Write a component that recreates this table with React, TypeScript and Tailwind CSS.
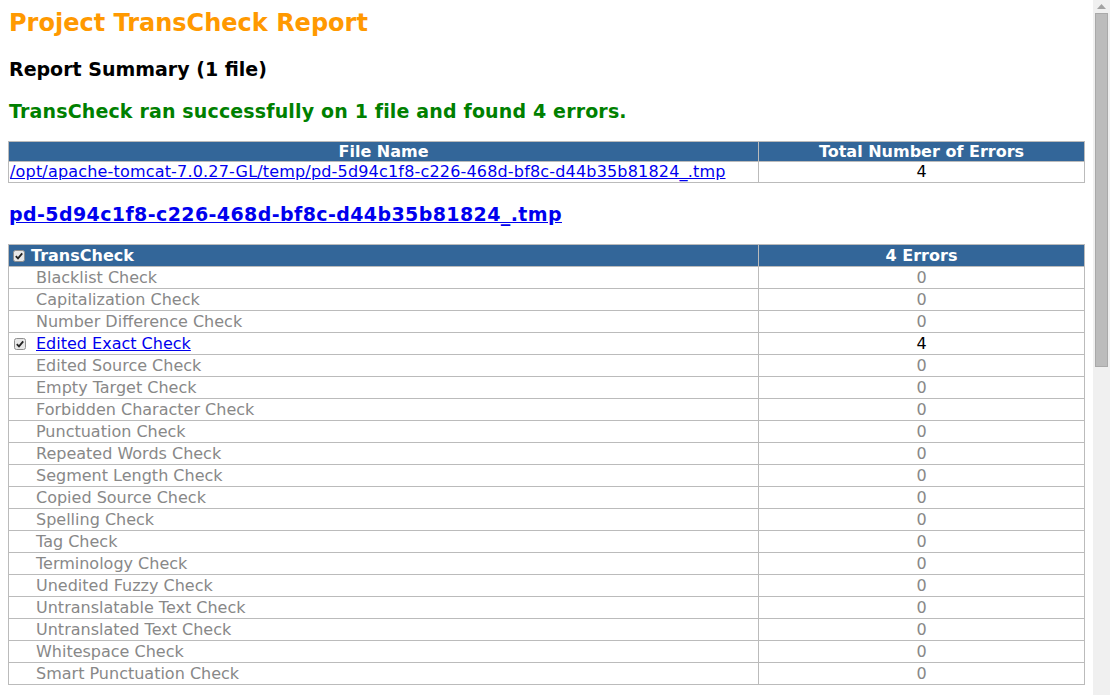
import React from "react";

const checks: { name: string; errors: number; flagged?: boolean }[] = [
  { name: "Blacklist Check", errors: 0 },
  { name: "Capitalization Check", errors: 0 },
  { name: "Number Difference Check", errors: 0 },
  { name: "Edited Exact Check", errors: 4, flagged: true },
  { name: "Edited Source Check", errors: 0 },
  { name: "Empty Target Check", errors: 0 },
  { name: "Forbidden Character Check", errors: 0 },
  { name: "Punctuation Check", errors: 0 },
  { name: "Repeated Words Check", errors: 0 },
  { name: "Segment Length Check", errors: 0 },
  { name: "Copied Source Check", errors: 0 },
  { name: "Spelling Check", errors: 0 },
  { name: "Tag Check", errors: 0 },
  { name: "Terminology Check", errors: 0 },
  { name: "Unedited Fuzzy Check", errors: 0 },
  { name: "Untranslatable Text Check", errors: 0 },
  { name: "Untranslated Text Check", errors: 0 },
  { name: "Whitespace Check", errors: 0 },
  { name: "Smart Punctuation Check", errors: 0 },
];

// small checked checkbox, drawn like the old windows one
function Tick() {
  return (
    <svg width="12" height="12" viewBox="0 0 12 12" className="shrink-0">
      <rect x="0.5" y="0.5" width="11" height="11" rx="2" fill="#e8e8e8" stroke="#8f8f8f" />
      <path d="M2.8 6.2 L5 8.4 L9.2 3.4" fill="none" stroke="#222" strokeWidth="1.8" />
    </svg>
  );
}

function Scrollbar() {
  return (
    <div className="w-[17px] shrink-0 bg-[#f0f0f0] flex flex-col items-center">
      <svg width="9" height="5" viewBox="0 0 9 5" className="mt-[4px]">
        <path d="M0 5 L4.5 0 L9 5 Z" fill="#a3a3a3" />
      </svg>
      <div className="mt-[4px] w-[13px] h-[354px] bg-[#bcbcbc] border border-[#a9a9a9]" />
    </div>
  );
}

export default function App() {
  return (
    <div className="flex h-[695px] overflow-hidden bg-white font-['DejaVu_Sans',Verdana,sans-serif]">
      <div className="flex-1 px-[8px]">
        <h1 className="mt-[9px] ml-[1px] text-[24px] leading-[28px] font-bold text-[#ff9900]">
          Project TransCheck Report
        </h1>
        <h2 className="mt-[21px] ml-[1px] text-[19px] leading-[22px] font-bold text-black">
          Report Summary (1 file)
        </h2>
        <p className="mt-[20px] ml-[1px] text-[19px] leading-[22px] font-bold tracking-[0.15px] text-[#008000]">
          TransCheck ran successfully on 1 file and found 4 errors.
        </p>

        <table className="mt-[19px] w-full border-collapse border border-[#bbbbbb] text-[16px]">
          <thead>
            <tr className="bg-[#336699] text-white h-[20px]">
              <th className="border border-[#bbbbbb] p-0 leading-[19px] font-bold">File Name</th>
              <th className="w-[326px] border border-[#bbbbbb] p-0 leading-[19px] font-bold">
                Total Number of Errors
              </th>
            </tr>
          </thead>
          <tbody>
            <tr className="h-[21px]">
              <td className="border border-[#bbbbbb] px-[1px] py-0 leading-[20px]">
                <a href="#" className="text-[#0000ee] underline tracking-[0.18px]">
                  /opt/apache-tomcat-7.0.27-GL/temp/pd-5d94c1f8-c226-468d-bf8c-d44b35b81824_.tmp
                </a>
              </td>
              <td className="border border-[#bbbbbb] p-0 text-center leading-[20px] text-black">4</td>
            </tr>
          </tbody>
        </table>

        <h3 className="mt-[20px] ml-[1px] text-[19px] leading-[22px] font-bold">
          <a href="#" className="text-[#0000ee] underline tracking-[0.4px]">
            pd-5d94c1f8-c226-468d-bf8c-d44b35b81824_.tmp
          </a>
        </h3>

        <table className="mt-[19px] w-full border-collapse border border-[#bbbbbb] text-[16px]">
          <thead>
            <tr className="bg-[#336699] text-white h-[22px]">
              <th className="border border-[#bbbbbb] p-0 text-left font-bold leading-[20px]">
                <div className="flex items-center gap-[6px] pl-[4px]">
                  <Tick />
                  <span>TransCheck</span>
                </div>
              </th>
              <th className="w-[326px] border border-[#bbbbbb] p-0 font-bold leading-[20px]">4 Errors</th>
            </tr>
          </thead>
          <tbody>
            {checks.map((c) => (
              <tr key={c.name} className="h-[22px]">
                <td className="border border-[#bbbbbb] p-0 leading-[20px]">
                  <div className="flex items-center">
                    <div className="w-[27px] shrink-0 flex pl-[5px]">{c.flagged && <Tick />}</div>
                    {c.flagged ? (
                      <a href="#" className="text-[#0000ee] underline">
                        {c.name}
                      </a>
                    ) : (
                      <span className="text-[#888888]">{c.name}</span>
                    )}
                  </div>
                </td>
                <td
                  className={
                    "border border-[#bbbbbb] p-0 text-center leading-[20px] " +
                    (c.flagged ? "text-black" : "text-[#888888]")
                  }
                >
                  {c.errors}
                </td>
              </tr>
            ))}
          </tbody>
        </table>
      </div>
      <Scrollbar />
    </div>
  );
}
